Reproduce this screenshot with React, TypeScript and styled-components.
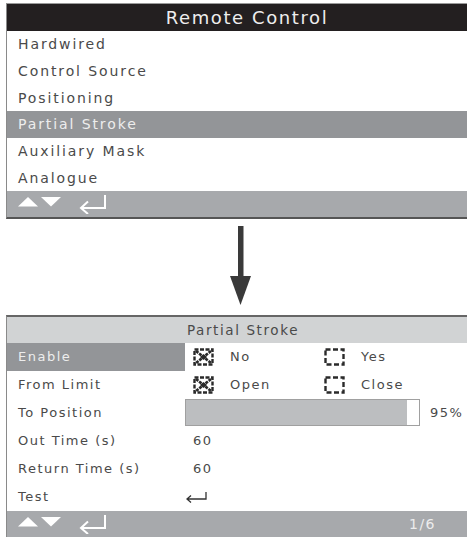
import styled, { createGlobalStyle } from "styled-components";

const GlobalStyle = createGlobalStyle`
    html, body {
        margin: 0;
        padding: 0;
        background: #ffffff;
    }
    body {
        font-family: "DejaVu Sans", "Liberation Sans", sans-serif;
        overflow: hidden;
    }
`

const Page = styled.div`
    width: 467px;
    height: 537px;
    padding: 3px 0 0 6px;
    box-sizing: border-box;
    display: flex;
    flex-direction: column;
`

const Panel = styled.div`
    width: 461px;
    border-left: 1px solid #8a8a8a;
    border-top: 1px solid #9a9a9a;
    box-sizing: border-box;
    display: flex;
    flex-direction: column;
`

const TopPanel = styled(Panel)`
    border-bottom: 2px solid #555;
`

const BottomPanel = styled(Panel)`
    border-top: 2px solid #666;
    margin-top: -1px;
`

const Title = styled.div<{ $dark?: boolean }>`
    height: ${p => p.$dark ? "27px" : "26px"};
    background: ${p => p.$dark ? "#231f20" : "#d1d3d4"};
    color: ${p => p.$dark ? "#eeeeee" : "#4a4a4a"};
    font-size: ${p => p.$dark ? "18px" : "13.5px"};
    letter-spacing: 1.6px;
    display: flex;
    align-items: center;
    justify-content: center;
    padding-left: ${p => p.$dark ? "20px" : "12px"};
`

const MenuItem = styled.div<{ $active?: boolean }>`
    height: 26.67px;
    display: flex;
    align-items: center;
    padding-left: 11px;
    font-size: 14px;
    letter-spacing: 1.9px;
    background: ${p => p.$active ? "#939598" : "transparent"};
    color: ${p => p.$active ? "#ededed" : "#4a4a4a"};
`

const Footer = styled.div`
    height: 26px;
    background: #a7a9ac;
    display: flex;
    align-items: center;
    padding: 0 0 0 11px;
    gap: 4px;
`

const PageNo = styled.span`
    margin-left: auto;
    margin-right: 31px;
    color: #ececec;
    font-size: 14px;
    letter-spacing: 1.5px;
`

const ArrowArea = styled.div`
    height: 97px;
    display: flex;
    align-items: flex-start;
    padding: 7px 0 0 224px;
    box-sizing: border-box;
`

const Row = styled.div`
    height: 28px;
    display: grid;
    grid-template-columns: 178px 1fr;
    align-items: stretch;
`

const Label = styled.div<{ $active?: boolean }>`
    display: flex;
    align-items: center;
    padding-left: 11px;
    font-size: 13px;
    letter-spacing: 1.5px;
    background: ${p => p.$active ? "#939598" : "transparent"};
    color: ${p => p.$active ? "#ededed" : "#4a4a4a"};
`

const Value = styled.div<{ $flush?: boolean }>`
    display: flex;
    align-items: center;
    padding-left: ${p => p.$flush ? "0" : "8px"};
    font-size: 13px;
    letter-spacing: 1.5px;
    color: #4a4a4a;
`

const Option = styled.div<{ $width: number }>`
    width: ${p => p.$width}px;
    display: flex;
    align-items: center;
    gap: 16px;
`

const Bar = styled.div`
    width: 235px;
    height: 27px;
    margin-left: -8px;
    box-sizing: border-box;
    border: 1px solid #a0a0a0;
    background: #ffffff;
    display: flex;
`

const BarFill = styled.div`
    background: #bcbec0;
    height: 100%;
`

const Percent = styled.span`
    margin-left: 10px;
`

const Check = ({ checked }: { checked?: boolean }) => (
    <svg width="21" height="18" viewBox="0 0 21 18">
        <rect x="1.5" y="1.5" width="18" height="15" fill="none" stroke="#2a2a2a" strokeWidth="2.4"
            strokeDasharray={checked ? "4 1.5" : "5 2.5"} />
        {checked && (
            <>
                <path d="M3 3 L18 15 M18 3 L3 15" stroke="#2a2a2a" strokeWidth="2.6" strokeDasharray="3 1" />
                <path d="M7 9 L10.5 6 L14 9 L10.5 12 Z" fill="#2a2a2a" />
            </>
        )}
    </svg>
)

const NavIcons = () => (
    <svg width="100" height="20" viewBox="0 0 100 20">
        <path d="M0 12.5 L10 3 L20 12.5 Z" fill="#fff" />
        <path d="M23 3 L43 3 L33 12.5 Z" fill="#fff" />
        <path d="M87 1 V14 H63 M70 7.5 L63 14 L70 20" fill="none" stroke="#fff" strokeWidth="2" />
    </svg>
)

const SmallEnter = () => (
    <svg width="24" height="12" viewBox="0 0 24 12">
        <path d="M21 1 V8 H2 M6 4.5 L2 8 L6 11.5" fill="none" stroke="#333" strokeWidth="1.3" />
    </svg>
)

const DownArrow = () => (
    <svg width="22" height="79" viewBox="0 0 22 79">
        <rect x="8" y="0" width="5.5" height="52" fill="#3a3a3a" />
        <path d="M0 50 L21 50 L10.5 79 Z" fill="#3a3a3a" />
    </svg>
)

export default function App() {
    const items = ["Hardwired", "Control Source", "Positioning", "Partial Stroke", "Auxiliary Mask", "Analogue"]
    const position = 95
    return (
        <Page>
            <GlobalStyle />
            <TopPanel>
                <Title $dark>Remote Control</Title>
                {items.map(item => (
                    <MenuItem key={item} $active={item === "Partial Stroke"}>{item}</MenuItem>
                ))}
                <Footer><NavIcons /></Footer>
            </TopPanel>
            <ArrowArea><DownArrow /></ArrowArea>
            <BottomPanel>
                <Title>Partial Stroke</Title>
                <Row>
                    <Label $active>Enable</Label>
                    <Value>
                        <Option $width={131}><Check checked />No</Option>
                        <Option $width={120}><Check />Yes</Option>
                    </Value>
                </Row>
                <Row>
                    <Label>From Limit</Label>
                    <Value>
                        <Option $width={131}><Check checked />Open</Option>
                        <Option $width={120}><Check />Close</Option>
                    </Value>
                </Row>
                <Row>
                    <Label>To Position</Label>
                    <Value>
                        <Bar><BarFill style={{ width: `${position}%` }} /></Bar>
                        <Percent>{position}%</Percent>
                    </Value>
                </Row>
                <Row>
                    <Label>Out Time (s)</Label>
                    <Value>60</Value>
                </Row>
                <Row>
                    <Label>Return Time (s)</Label>
                    <Value>60</Value>
                </Row>
                <Row>
                    <Label>Test</Label>
                    <Value $flush><SmallEnter /></Value>
                </Row>
                <Footer>
                    <NavIcons />
                    <PageNo>1/6</PageNo>
                </Footer>
            </BottomPanel>
        </Page>
    )
}
